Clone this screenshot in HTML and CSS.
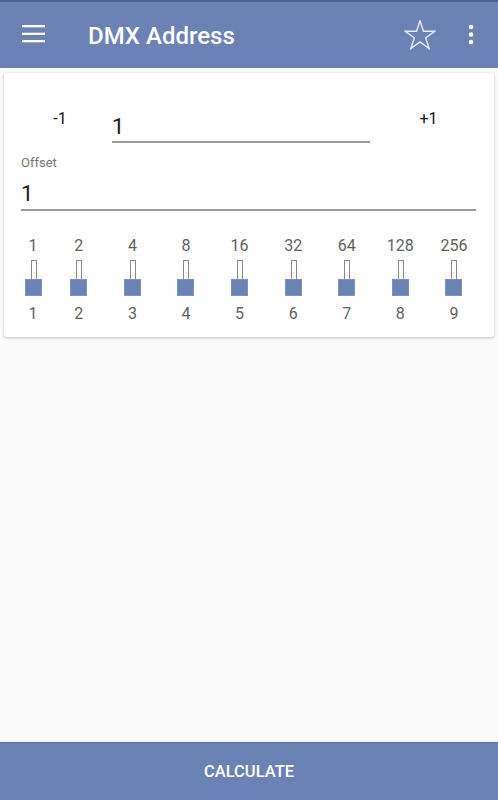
FILE: index.html
```html
<!DOCTYPE html>
<html lang="en">
<head>
<meta charset="utf-8">
<title>DMX Address</title>
<link rel="stylesheet" href="styles.css">
</head>
<body>
<div class="app">
  <header class="toolbar">
    <svg class="menu-icon" width="23" height="18" viewBox="0 0 23 18">
      <rect x="0" y="0" width="23" height="2.3" fill="#fff"/>
      <rect x="0" y="7.7" width="23" height="2.3" fill="#fff"/>
      <rect x="0" y="15" width="23" height="2.3" fill="#fff"/>
    </svg>
    <h1 class="title">DMX Address</h1>
    <svg class="star-icon" width="32" height="30" viewBox="0 0 32 30">
      <polygon points="16,0.8 19.48,11.21 30.74,11.21 21.63,17.83 25.11,28.54 16,21.92 6.89,28.54 10.37,17.83 1.26,11.21 12.52,11.21" fill="none" stroke="#e6ebf4" stroke-width="1.4" stroke-linejoin="miter"/>
    </svg>
    <svg class="more-icon" width="6" height="22" viewBox="0 0 6 22">
      <circle cx="3" cy="3" r="2.3" fill="#fff"/>
      <circle cx="3" cy="10.5" r="2.3" fill="#fff"/>
      <circle cx="3" cy="18" r="2.3" fill="#fff"/>
    </svg>
  </header>

  <main class="card">
    <div class="address-row">
      <div class="step step-minus">-1</div>
      <div class="field field-address">1</div>
      <div class="step step-plus">+1</div>
    </div>
    <div class="offset">
      <div class="offset-label">Offset</div>
      <div class="field field-offset">1</div>
    </div>
    <div class="switches">
      <div class="sw"><span class="val">1</span><span class="stem"></span><span class="knob"></span><span class="num">1</span></div>
      <div class="sw"><span class="val">2</span><span class="stem"></span><span class="knob"></span><span class="num">2</span></div>
      <div class="sw"><span class="val">4</span><span class="stem"></span><span class="knob"></span><span class="num">3</span></div>
      <div class="sw"><span class="val">8</span><span class="stem"></span><span class="knob"></span><span class="num">4</span></div>
      <div class="sw"><span class="val">16</span><span class="stem"></span><span class="knob"></span><span class="num">5</span></div>
      <div class="sw"><span class="val">32</span><span class="stem"></span><span class="knob"></span><span class="num">6</span></div>
      <div class="sw"><span class="val">64</span><span class="stem"></span><span class="knob"></span><span class="num">7</span></div>
      <div class="sw"><span class="val">128</span><span class="stem"></span><span class="knob"></span><span class="num">8</span></div>
      <div class="sw"><span class="val">256</span><span class="stem"></span><span class="knob"></span><span class="num">9</span></div>
    </div>
  </main>

  <div class="spacer"></div>

  <button class="calc-btn">CALCULATE</button>
</div>
</body>
</html>
```
FILE: styles.css
```css
* { box-sizing: border-box; }

html, body {
  margin: 0;
  padding: 0;
  background: #fafafa;
  font-family: Roboto, "Liberation Sans", Arial, sans-serif;
}

.app {
  height: 800px;
  display: flex;
  flex-direction: column;
}

.toolbar {
  height: 68px;
  flex: none;
  background: #6b82b4;
  border-top: 2px solid #52638c;
  display: flex;
  align-items: center;
  color: #fff;
}

.menu-icon {
  margin-left: 22px;
  margin-top: -2px;
  display: block;
}

.title {
  margin: 0 0 0 43px;
  font-size: 24px;
  font-weight: 500;
  line-height: 28px;
  color: #fff;
  margin-top: 1px;
}

.star-icon {
  margin-left: auto;
  margin-top: -1px;
  display: block;
}

.more-icon {
  margin-left: 32px;
  margin-right: 24px;
  margin-top: -1px;
  display: block;
}

.card {
  flex: none;
  margin: 5px 4px 0 4px;
  height: 264px;
  background: #fff;
  border-radius: 2px;
  box-shadow: 0 1px 3px rgba(0,0,0,0.22), 0 0 1px rgba(0,0,0,0.12);
  padding-top: 35px;
}

.address-row {
  display: flex;
  align-items: flex-start;
  padding-left: 12px;
}

.step {
  font-size: 16px;
  line-height: 20px;
  color: #141414;
  text-align: center;
  margin-top: 1px;
}

.step-minus {
  width: 88px;
  margin-right: 8px;
}

.step-plus {
  width: 85px;
  margin-left: 16px;
}

.field {
  font-size: 22px;
  line-height: 28px;
  color: #1a1a1a;
  border-bottom: 2px solid #9a9a9a;
}

.field-address {
  width: 258px;
  margin-top: 5px;
  padding-bottom: 0;
}

.offset {
  margin: 12px 18px 0 17px;
}

.offset-label {
  font-size: 13px;
  line-height: 15px;
  color: #757575;
}

.field-offset {
  margin-top: 10px;
  padding-bottom: 1px;
}

.switches {
  margin: 25px 0 0 10px;
  display: grid;
  grid-template-columns: 38px repeat(8, 53.6px);
}

.sw {
  display: flex;
  flex-direction: column;
  align-items: center;
}

.val, .num {
  font-size: 16px;
  line-height: 20px;
  color: #5f5f5f;
}

.stem {
  width: 6px;
  height: 20px;
  margin-top: 4px;
  background: #fff;
  border: 1px solid #8a8a8a;
  border-bottom: none;
  margin-left: 1px;
}

.knob {
  width: 17px;
  height: 17px;
  margin-top: -1px;
  background: #6b82b4;
  border: 1px solid #7d91bf;
}

.num {
  margin-top: 8px;
}

.spacer {
  flex: 1;
}

.calc-btn {
  flex: none;
  height: 58px;
  width: 100%;
  border: none;
  border-top: 1px solid #5a70a3;
  background: #6b82b4;
  color: #fff;
  font-family: Roboto, "Liberation Sans", Arial, sans-serif;
  font-size: 16.5px;
  font-weight: 500;
  padding: 0;
  margin: 0;
}
```
